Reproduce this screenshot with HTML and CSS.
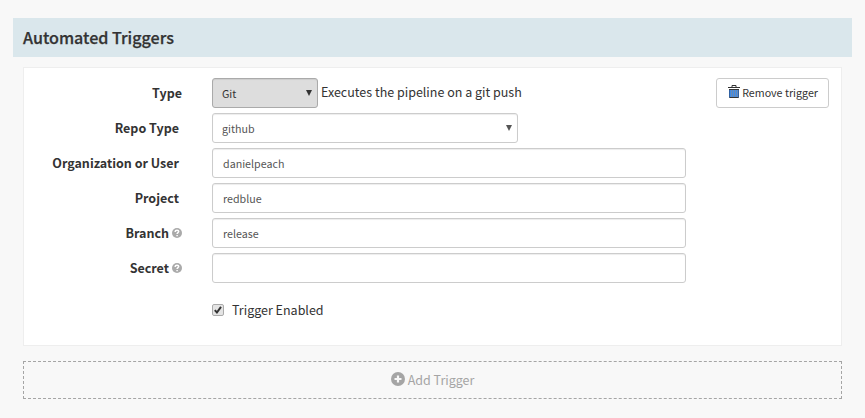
FILE: index.html
```html
<!DOCTYPE html>
<html lang="en">
<head>
<meta charset="utf-8">
<title>Automated Triggers</title>
<link rel="stylesheet" href="styles.css">
</head>
<body>
<main class="section">
  <h4 class="heading"><span>Automated Triggers</span></h4>
  <div class="content">
    <form class="trigger">
      <div class="row">
        <div class="label"><span>Type</span></div>
        <div class="select select-type"><span>Git</span><svg class="arrow" viewBox="0 0 6 6"><path d="M0 0H6L3 6Z"/></svg></div>
        <span class="description">Executes the pipeline on a git push</span>
        <button type="button" class="remove">
          <svg class="trash" viewBox="0 0 12 13"><path class="trash-body" d="M1 4H11V12.5H1Z"/><path class="trash-lines" d="M3.5 5V12M5.5 5V12M7.5 5V12M9.5 5V12"/><path class="trash-side" d="M1.5 4V12.5M10.5 4V12.5"/><path class="trash-lid" d="M0 2.5H12M4 2V0.5H8V2M1 4.5H11M1.5 12.5H10.5"/></svg>
          <span>Remove trigger</span>
        </button>
      </div>
      <div class="row">
        <div class="label"><span>Repo Type</span></div>
        <div class="select select-repo"><span>github</span><svg class="arrow" viewBox="0 0 6 6"><path d="M0 0H6L3 6Z"/></svg></div>
      </div>
      <div class="row">
        <div class="label"><span>Organization or User</span></div>
        <input class="input" type="text" value="danielpeach">
      </div>
      <div class="row">
        <div class="label"><span>Project</span></div>
        <input class="input" type="text" value="redblue">
      </div>
      <div class="row">
        <div class="label help"><span>Branch</span><svg class="question" viewBox="0 0 10 10"><circle cx="5" cy="5" r="5"/><path d="M3.2 4V3.6C3.2 2.6 4 2.2 5 2.2S6.7 2.7 6.7 3.6C6.7 4.7 5.1 4.6 5.1 6M5.1 6.9V8.3"/></svg></div>
        <input class="input" type="text" value="release">
      </div>
      <div class="row">
        <div class="label help"><span>Secret</span><svg class="question" viewBox="0 0 10 10"><circle cx="5" cy="5" r="5"/><path d="M3.2 4V3.6C3.2 2.6 4 2.2 5 2.2S6.7 2.7 6.7 3.6C6.7 4.7 5.1 4.6 5.1 6M5.1 6.9V8.3"/></svg></div>
        <input class="input" type="text" value="">
      </div>
      <div class="enabled">
        <svg class="check" viewBox="0 0 12 12"><rect x=".5" y=".5" width="11" height="11" rx="1.5"/><path d="M2.8 6.2L4.9 8.5L9 2.8"/></svg>
        <span>Trigger Enabled</span>
      </div>
    </form>
    <button type="button" class="add">
      <svg class="plus" viewBox="0 0 14 14"><circle cx="7" cy="7" r="7"/><path d="M7 3.5V10.5M3.5 7H10.5"/></svg>
      <span>Add Trigger</span>
    </button>
  </div>
</main>
</body>
</html>
```
FILE: styles.css
```css
* { box-sizing: border-box; }
body {
  margin: 0;
  background: #f8f8f8;
  color: #333;
  font: 12.5px/20px "Noto Sans CJK JP", "Noto Sans CJK SC", sans-serif;
}
.section { padding: 18px 13px 0; }
.heading {
  margin: 0;
  height: 39px;
  padding: 0 10px;
  display: flex;
  align-items: center;
  background: #dae7ec;
  font-size: 16.1px;
  font-weight: 500;
  -webkit-text-stroke: .25px #333;
}
.heading span { margin-top: -1px; }
.content { padding: 10px 10px 0; }
.trigger {
  height: 279px;
  padding: 10px 12px 0 0;
  background: #fff;
  border: 1px solid #eee;
}
.row { display: flex; align-items: flex-start; height: 35px; }
.label {
  width: 155px;
  margin-right: 33px;
  padding-top: 5px;
  display: flex;
  justify-content: flex-end;
  font-weight: 700;
}
.row:first-child .label { width: 158px; margin-right: 30px; }
.help { width: 158px; margin-right: 30px; gap: 3px; }
.question { width: 10px; height: 10px; margin-top: 5px; }
.question circle { fill: #aaa; }
.question path { fill: none; stroke: #fff; stroke-width: 1.5; }
.select, .input, .remove {
  height: 30px;
  border: 1px solid #ccc;
  border-radius: 3px;
  background: #fff;
  font-family: inherit;
  font-size: 10.7px;
  line-height: 20px;
  color: #555;
}
.select {
  padding: 5px 5px 0 9px;
  display: flex;
  justify-content: space-between;
  box-shadow: inset 0 1px 1px rgba(0, 0, 0, .075);
}
.select-type { width: 106px; background: #ddd; border-color: #aaa; color: #333; }
.select-repo { width: 306px; }
.arrow { width: 6px; height: 6px; margin-top: 6px; fill: currentColor; }
.input {
  width: 474px;
  padding: 0 10px;
  box-shadow: inset 0 1px 1px rgba(0, 0, 0, .075);
}
.description { padding: 4px 0 0 3px; }
.remove {
  width: 113px;
  margin-left: auto;
  padding: 0 10px 0 11px;
  display: flex;
  justify-content: space-between;
  align-items: center;
  color: #333;
}
.trash { width: 12px; height: 13px; margin-top: -3px; }
.trash-body { fill: #3f8ce4; }
.trash-lines { stroke: #8b8a96; stroke-width: .6; fill: none; }
.trash-side { stroke: #2f61a3; fill: none; }
.trash-lid { stroke: #333; fill: none; }
.enabled { display: flex; align-items: center; gap: 8px; padding: 12px 0 0 188px; }
.check { width: 12px; height: 12px; }
.check rect { fill: #e4e4e4; stroke: #aaa; }
.check path { fill: none; stroke: #333; stroke-width: 2; }
.add {
  width: 100%;
  height: 38px;
  margin-top: 15px;
  padding: 0;
  display: flex;
  align-items: center;
  justify-content: center;
  gap: 3px;
  background: none;
  border: 1px dashed #a5a5a5;
  font: inherit;
  color: #a5a5a5;
}
.plus { width: 14px; height: 14px; margin-top: -2px; fill: #a5a5a5; }
.plus path { stroke: #f8f8f8; stroke-width: 2.2; }
```
